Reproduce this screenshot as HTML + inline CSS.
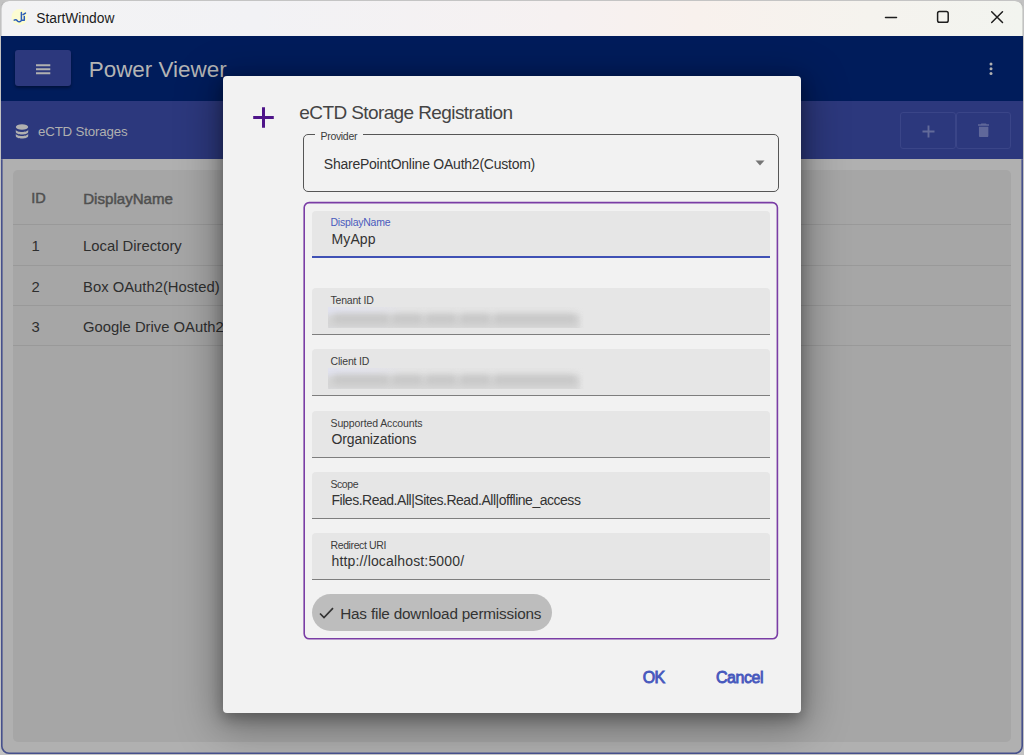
<!DOCTYPE html>
<html lang="en">
<head>
<meta charset="utf-8">
<title>StartWindow</title>
<style>
*{box-sizing:border-box;margin:0;padding:0}
html,body{width:1024px;height:755px;overflow:hidden;background:#c2c2c2;font-family:"Liberation Sans",sans-serif;}
.abs{position:absolute}
.t{position:absolute;white-space:pre;line-height:1}
#win{position:absolute;left:1px;top:1px;width:1021.5px;height:753px;border-radius:8px;overflow:hidden;background:#b0b0b0;}
#wb1{position:absolute;left:1px;top:0;width:1021.5px;height:36px;border:1px solid #c4c4c4;border-left-color:rgba(0,0,0,.12);border-right-color:rgba(0,0,0,.12);border-bottom:none;border-radius:8px 8px 0 0}
#inner{position:absolute;left:-1px;top:-1px;width:1024px;height:755px}
#titlebar{position:absolute;left:0;top:0;width:100%;height:36px;background:linear-gradient(90deg,#f3f3f4 0%,#f2f2f5 25%,#f6f1f1 55%,#f8f1ed 68%,#f5f3ee 85%,#f2f4ef 100%);}
#appbar{position:absolute;left:0;top:35.7px;width:100%;height:65px;background:#001c5b;}
#subbar{position:absolute;left:0;top:100.5px;width:100%;height:58.8px;background:#2c387d;}
#menu{position:absolute;left:15px;top:14.3px;width:55.5px;height:36.5px;background:#2c387d;border-radius:3px;box-shadow:0 2px 3px rgba(0,0,0,.35)}
#card{position:absolute;left:12.6px;top:170px;width:998.1px;height:572px;border-radius:5px;background:#a6a6a6;}
.hd{color:#505050;-webkit-text-stroke:0.5px #505050}
.sep{position:absolute;left:0;width:100%;height:1px;background:#999}
.tb{position:absolute;top:11.500px;width:55px;height:37px;border:1px solid #3a4588;border-radius:3px;}
#dialog{position:absolute;left:223px;top:76px;width:578px;height:637.4px;border-radius:4px;background:#f2f2f2;box-shadow:0 10px 40px 6px rgba(0,0,0,.34),0 5px 14px 1px rgba(0,0,0,.26);}
#prov{position:absolute;left:80px;top:58px;width:476px;height:58px;border:1px solid #565656;border-radius:5px;}
#provlab{position:absolute;left:10.5px;top:-6px;width:48.5px;height:12px;background:#f2f2f2;}
.f{position:absolute;left:89px;width:458px;height:47.4px;background:#e6e6e6;border-radius:4px 4px 0 0;border-bottom:1px solid #7e7e7e}
.f .l{position:absolute;left:18.5px;top:6px;font-size:10.5px;color:#3c3c3c;white-space:pre;line-height:12px}
.f .v{position:absolute;left:19.5px;top:20.3px;font-size:14px;color:#333;white-space:pre;line-height:16px}
.blur{position:absolute;left:16px;top:18.5px;width:256px;height:21px;overflow:hidden;background:linear-gradient(90deg,#e1e2ee 0,#e3e3ea 18%,#e4e4e4 30%,#e4e4e4 92%,#e6e6e6 100%)}
.blur i{position:absolute;top:7px;height:10px;background:#c8c8c8;filter:blur(3px);border-radius:3px}
.blur b{position:absolute;left:-4px;top:8px;width:256px;height:15px;background:#d6d6d6;filter:blur(2.5px)}
.btn{font-size:16px;color:#4658bd;-webkit-text-stroke:0.85px #4658bd}
#chip{position:absolute;left:89px;top:518px;width:240.3px;height:37.4px;border-radius:19px;background:#bdbdbd;}
</style>
</head>
<body>
<div id="win"><div id="inner">
  <div id="titlebar">
    <svg class="abs" style="left:10px;top:8px" width="20" height="19" viewBox="10 8 20 19">
      <circle cx="19.6" cy="17" r="8.1" fill="#fcfcd2"/>
      <path d="M14.2 20.1c1.3-.7 2.300-.4 3.300.8 1 1.100 2.900 1.100 3.900-.6M21.400 12.600v7.600h2.900v-3.600M23.100 14.700l2.400-1.600" fill="none" stroke="#2a5cb8" stroke-width="1.500" stroke-linecap="round" stroke-linejoin="round"/>
    </svg>
    <div class="t" id="tt" style="left:36.2px;top:12.2px;font-size:13.8px;color:#1b1b1b">StartWindow</div>
    <svg class="abs" style="left:883.5px;top:10.1px" width="14" height="14" viewBox="0 0 14 14"><path d="M1.500 7.500h11" stroke="#1e1e1e" stroke-width="1.500" stroke-linecap="round"/></svg>
    <svg class="abs" style="left:936.4px;top:10px" width="14" height="14" viewBox="0 0 14 14"><rect x="1.600" y="1.600" width="10.600" height="10.600" rx="1.800" fill="none" stroke="#1e1e1e" stroke-width="1.500"/></svg>
    <svg class="abs" style="left:989.5px;top:10.2px" width="14" height="14" viewBox="0 0 14 14"><path d="M1.700 1.700l10.800 10.800M12.500 1.700L1.700 12.500" stroke="#1e1e1e" stroke-width="1.500" stroke-linecap="round"/></svg>
  </div>
  <div id="appbar">
    <div id="menu">
      <svg class="abs" style="left:20.7px;top:13.6px" width="15" height="11" viewBox="0 0 15 11"><path d="M0 1.2h14.3M0 5.2h14.3M0 9.200h14.3" stroke="#b0b0b0" stroke-width="1.9"/></svg>
    </div>
    <div class="t" id="pv" style="left:88.7px;top:23.2px;font-size:22.45px;color:#b4b4b4">Power Viewer</div>
    <svg class="abs" style="left:988.5px;top:26px" width="4" height="14" viewBox="0 0 4 14"><circle cx="2" cy="2.100" r="1.500" fill="#b0b0b0"/><circle cx="2" cy="6.800" r="1.500" fill="#b0b0b0"/><circle cx="2" cy="11.500" r="1.500" fill="#b0b0b0"/></svg>
  </div>
  <div id="subbar">
    <svg class="abs" style="left:15.2px;top:23.7px" width="14" height="15" viewBox="0 0 14 15">
      <ellipse cx="7" cy="3" rx="6.2" ry="2.8" fill="#b0b0b0"/>
      <path d="M.8 5.2c0 3.7 12.4 3.7 12.4 0v2.5c0 3.7-12.400 3.700-12.400 0z" fill="#b0b0b0"/>
      <path d="M.8 9.200c0 3.700 12.400 3.700 12.400 0v2.500c0 3.700-12.400 3.700-12.400 0z" fill="#b0b0b0"/>
    </svg>
    <div class="t" id="es" style="left:38px;top:24.6px;font-size:13.3px;letter-spacing:-0.17px;color:#b0b0b0">eCTD Storages</div>
    <div class="tb" style="left:900px;width:56px">
      <svg class="abs" style="left:20.700px;top:11.700px" width="13" height="13" viewBox="0 0 13 13"><path d="M6.500 0.500v12M0.500 6.500h12" stroke="#626a9a" stroke-width="1.900"/></svg>
    </div>
    <div class="tb" style="left:956.400px">
      <svg class="abs" style="left:20.800px;top:9.800px" width="11.300" height="14.600" viewBox="0 0 12 15"><path d="M3.500 0.300h5l.7.900H12v1.600H0V1.200h2.800zM1 3.800h10v9.600c0 .9-.6 1.500-1.500 1.500h-7c-.9 0-1.500-.6-1.500-1.500z" fill="#60689a"/></svg>
    </div>
  </div>
  <div id="card">
    <div class="t hd" style="left:18.6px;top:20.8px;font-size:14.5px" id="h1">ID</div>
    <div class="t hd" style="left:70.6px;top:20.8px;font-size:15.1px" id="h2">DisplayName</div>
    <div class="sep" style="top:54.2px"></div>
    <div class="t" style="left:19px;top:68.9px;font-size:14.8px;color:#2e2e2e">1</div>
    <div class="t" style="left:70.500px;top:68.9px;font-size:14.8px;color:#2e2e2e" id="r1">Local Directory</div>
    <div class="sep" style="top:94.6px"></div>
    <div class="t" style="left:19px;top:109.6px;font-size:14.8px;color:#2e2e2e">2</div>
    <div class="t" style="left:70.500px;top:109.6px;font-size:14.8px;color:#2e2e2e" id="r2">Box OAuth2(Hosted)</div>
    <div class="sep" style="top:135px"></div>
    <div class="t" style="left:19px;top:149.8px;font-size:14.8px;color:#2e2e2e">3</div>
    <div class="t" style="left:70.500px;top:149.8px;font-size:14.8px;color:#2e2e2e" id="r3">Google Drive OAuth2</div>
    <div class="sep" style="top:175.4px"></div>
  </div>

  <div id="dialog">
    <svg class="abs" style="left:29px;top:30px" width="23" height="23" viewBox="0 0 23 23"><path d="M11.500 1.200v20.600M1.200 11.500h20.600" stroke="#4e1489" stroke-width="3"/></svg>
    <div class="t" id="dt" style="left:76.3px;top:26.8px;font-size:19px;letter-spacing:-0.600px;color:#444">eCTD Storage Registration</div>
    <div id="prov">
      <div id="provlab"></div>
      <div class="t" style="left:16.5px;top:-3.8px;font-size:10.5px;letter-spacing:-0.31px;color:#3c3c3c" id="pl">Provider</div>
      <div class="t" style="left:19.8px;top:22px;font-size:14px;letter-spacing:-0.24px;color:#333" id="pvv">SharePointOnline OAuth2(Custom)</div>
      <svg class="abs" style="left:450.6px;top:24.8px" width="10" height="6" viewBox="0 0 10 6"><path d="M0.500 0.500h9L5 5.500z" fill="#757575"/></svg>
    </div>
    <svg class="abs" style="left:0;top:0" width="578" height="637" viewBox="0 0 578 637"><rect x="81.2" y="126.6" width="473.2" height="436.2" rx="5" fill="none" stroke="#7a3da5" stroke-width="1.6"/></svg>
    <div class="f" style="top:135px;height:47px;border-bottom:2px solid #3f51b5"><div class="l" style="color:#4a5bbd;letter-spacing:-0.24px;top:5.4px">DisplayName</div><div class="v" style="letter-spacing:0.12px">MyApp</div></div>
    <div class="f" style="top:212px"><div class="l" style="letter-spacing:-0.2px">Tenant ID</div><div class="blur"><b></b><i style="left:5px;width:56px"></i><i style="left:64px;width:30px"></i><i style="left:98px;width:30px"></i><i style="left:132px;width:30px"></i><i style="left:166px;width:82px"></i></div></div>
    <div class="f" style="top:273px"><div class="l" style="letter-spacing:-0.17px">Client ID</div><div class="blur"><b></b><i style="left:5px;width:56px"></i><i style="left:64px;width:30px"></i><i style="left:98px;width:30px"></i><i style="left:132px;width:30px"></i><i style="left:166px;width:82px"></i></div></div>
    <div class="f" style="top:334.5px"><div class="l" style="letter-spacing:-0.11px">Supported Accounts</div><div class="v" style="letter-spacing:-0.11px">Organizations</div></div>
    <div class="f" style="top:396px"><div class="l" style="letter-spacing:-0.45px">Scope</div><div class="v" style="letter-spacing:-0.48px">Files.Read.All|Sites.Read.All|offline_access</div></div>
    <div class="f" style="top:457px"><div class="l" style="letter-spacing:-0.39px">Redirect URI</div><div class="v" style="letter-spacing:0.16px">http://localhost:5000/</div></div>
    <div id="chip">
      <svg class="abs" style="left:7px;top:13.3px" width="15" height="12" viewBox="0 0 15 12"><path d="M1 6.500l4 4L14 1.200" fill="none" stroke="#333" stroke-width="1.700"/></svg>
      <div class="t" style="left:28.2px;top:11.6px;font-size:15.3px;letter-spacing:-0.19px;color:#333" id="ct">Has file download permissions</div>
    </div>
    <div class="t btn" id="ok" style="left:419.7px;top:593.8px;letter-spacing:-0.6px">OK</div>
    <div class="t btn" id="cc" style="left:493px;top:593.8px;letter-spacing:-0.45px">Cancel</div>
  </div>
</div></div>
<div id="wb1"></div><svg class="abs" style="left:0;top:0" width="1024" height="755" viewBox="0 0 1024 755"><path d="M1.800 159.300V746a7.200 7.200 0 0 0 7.200 7.200H1015a7.200 7.200 0 0 0 7.200-7.200V159.300" fill="none" stroke="#46508c" stroke-width="1.600"/></svg>
</body>
</html>
